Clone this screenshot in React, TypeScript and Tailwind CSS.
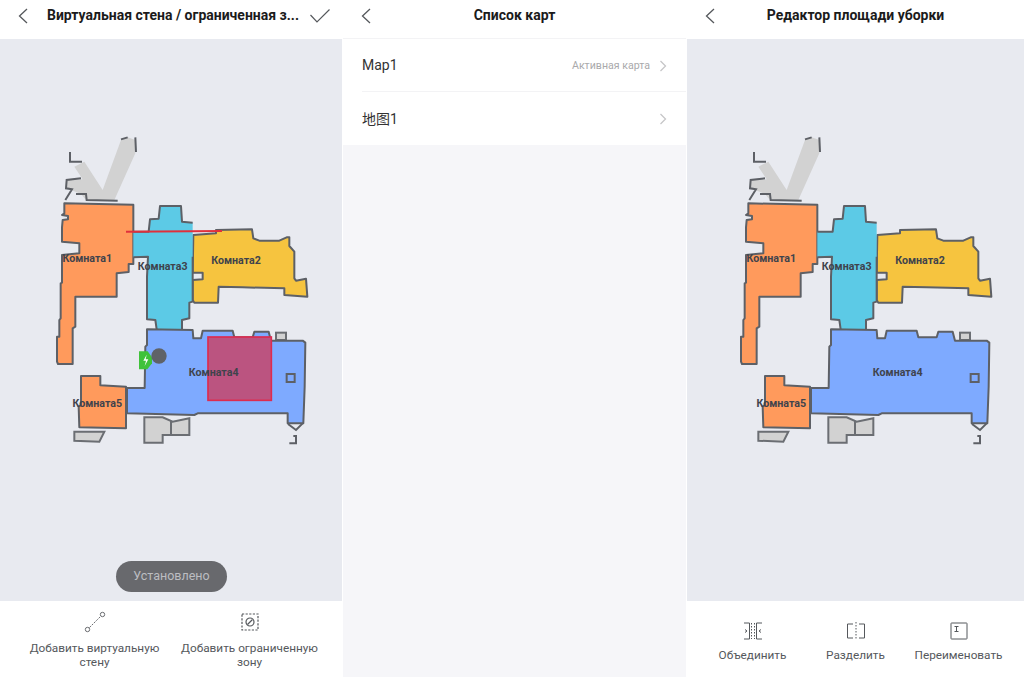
import React from 'react';

const room1 = '55,250 262,254 262,432 248,432 248,456 212,460 212,530 88,530 88,620 80,625 80,732 36,732 33,725 33,650 40,650 40,600 44,595 44,490 48,488 48,405 100,400 100,370 48,365 48,322 50,300 66,298 66,288 48,285 55,280';
const room2 = '442,345 510,340 510,330 618,328 622,355 640,362 700,362 722,352 730,352 730,378 745,395 745,475 750,482 780,476 784,530 715,525 715,505 590,502 518,500 516,548 445,548 440,540 440,480 470,478 470,458 440,458';
const room3 = '262,335 308,335 312,298 338,296 342,258 405,258 408,305 440,308 440,545 430,548 430,595 408,600 408,628 332,628 328,600 303,598 303,470 306,410 262,412';
const room4 = '303,628 440,630 442,655 465,655 470,632 560,632 565,652 620,652 625,635 668,635 675,662 770,662 778,668 776,800 772,910 725,910 725,880 455,880 445,885 243,880 243,804 296,804 298,680 303,675';
const room5 = '105,768 163,768 163,796 240,800 240,925 100,922 98,860 105,855';

const labels = [
  { text: 'Комната1', x: 124, y: 426 },
  { text: 'Комната3', x: 350, y: 449 },
  { text: 'Комната2', x: 570, y: 433 },
  { text: 'Комната4', x: 503, y: 768 },
  { text: 'Комната5', x: 154, y: 860 },
];

function RoomMap({ editing }: { editing?: boolean }) {
  return (
    <svg width="280" height="330" viewBox="0 0 840 990" className="block shrink-0">
      <g fill="#d2d2d2">
        <polygon points="85,140 115,125 170,210 225,60 245,52 268,60 268,100 205,240 120,240 105,222 62,205 62,180 110,178" />
        <polygon points="85,935 175,935 160,965 85,962" stroke="#6b6e73" strokeWidth="6" />
        <path d="M295 892 L350 892 L380 905 L430 895 L430 945 L350 945 L350 968 L295 968 Z M375 905 L375 945" stroke="#6b6e73" strokeWidth="6" />
        <rect x="690" y="638" width="30" height="22" stroke="#6b6e73" strokeWidth="6" />
      </g>
      <g fill="none" stroke="#5d6066" strokeWidth="6">
        <path d="M225 58 L245 52 M268 52 L270 96" />
        <path d="M72 96 L72 125 L108 125" />
        <path d="M105 175 L62 180 L60 205 L78 208 L58 240 M90 222 L120 222 L122 240 L215 242" />
        <path d="M50 320 L96 322" strokeWidth="8" />
        <path d="M726 912 L750 930 L770 910 M730 970 L750 970 L750 948 L742 948" />
      </g>
      <g stroke="#5d6066" strokeWidth="6" strokeLinejoin="round">
        <polygon points={room1} fill="#ff9a5c" />
        <polygon points={room2} fill="#f6c43f" />
        <polygon points={room3} fill="#5ccae6" stroke="none" />
        <path d="M262 335 L308 335 L312 298 L338 296 L342 258 L405 258 L408 305 L440 308 M440 410 L440 545 L430 548 L430 595 L408 600 L408 628 M332 628 L328 600 L303 598 L303 470 L306 410 L262 412" fill="none" />
        <polygon points={room4} fill="#7eaaff" />
        <polygon points={room5} fill="#ff9a5c" />
      </g>
      <rect x="722" y="762" width="24" height="24" fill="none" stroke="#5d6066" strokeWidth="6" />
      {!editing && (
        <g>
          <line x1="240" y1="335" x2="528" y2="333" stroke="#e0303c" strokeWidth="6" />
          <rect x="486" y="651" width="190" height="190" fill="#bb5480" stroke="#dc2c50" strokeWidth="5" />
          <path d="M279 694 L305 694 L318 712 L318 730 L304 748 L279 748 Z" fill="#3fc23a" />
          <path d="M302 704 L292 722 L300 722 L296 738 L307 718 L299 718 Z" fill="#fff" />
          <circle cx="339" cy="708" r="23" fill="#5f6267" />
        </g>
      )}
      {labels.map((l) => (
        <text
          key={l.text}
          x={l.x}
          y={l.y}
          textAnchor="middle"
          fontFamily="Roboto, sans-serif"
          fontWeight="700"
          fontSize="32"
          fill="#3f434c"
        >
          {l.text}
        </text>
      ))}
    </svg>
  );
}

function Back() {
  return (
    <svg width="12" height="16" viewBox="0 0 12 16" fill="none" stroke="#55585c" strokeWidth="1.3" className="shrink-0">
      <path d="M10 1 L2.5 8 L10 15" />
    </svg>
  );
}

function Chevron() {
  return (
    <svg width="8" height="12" viewBox="0 0 8 12" fill="none" stroke="#c6c6c8" strokeWidth="1.3" className="shrink-0">
      <path d="M1.5 1 L6.5 6 L1.5 11" />
    </svg>
  );
}

function Header({ title, check }: { title: string; check?: boolean }) {
  return (
    <div className="h-[39px] shrink-0 bg-white flex items-center pl-[17px] pb-[8px]">
      <Back />
      <div
        className={
          check
            ? 'ml-[18px] w-[250px] text-[14px] font-bold text-[#1b1b1b] whitespace-nowrap'
            : 'flex-1 pr-[29px] text-center text-[14px] font-bold text-[#1b1b1b] whitespace-nowrap'
        }
      >
        {title}
      </div>
      {check && (
        <svg width="20" height="14" viewBox="0 0 20 14" fill="none" stroke="#55585c" strokeWidth="1.2" className="ml-[13px]">
          <path d="M0.5 6 L7 13 L19.5 0.5" />
        </svg>
      )}
    </div>
  );
}

function Action({ label, width, children }: { label: React.ReactNode; width: string; children: React.ReactNode }) {
  return (
    <div className={`${width} flex flex-col items-center text-center text-[11.8px] leading-[14px] text-[#55585c]`}>
      {children}
      <div className="mt-[8px]">{label}</div>
    </div>
  );
}

export default function App() {
  return (
    <div className="flex w-[1024px] h-[677px] overflow-hidden bg-white font-['Roboto','Noto_Sans_CJK_SC',sans-serif]">
      {/* virtual wall */}
      <div className="w-[343px] flex flex-col border-r border-white">
        <Header title="Виртуальная стена / ограниченная з..." check />
        <div className="relative flex-1 bg-[#e8eaf0] pl-[46px] pt-[81px]">
          <RoomMap />
          <div className="absolute left-[116px] bottom-[9px] w-[111px] h-[31px] rounded-full bg-[#68696d] flex items-center justify-center text-[12.5px] text-[#bcbdc1]">
            Установлено
          </div>
        </div>
        <div className="h-[76px] shrink-0 bg-white flex pl-[17px] pt-[10px]">
          <Action
            width="w-[155px]"
            label={<>Добавить виртуальную<br />стену</>}
          >
            <svg width="22" height="22" viewBox="0 0 22 22" fill="none" stroke="#6a6c70" strokeWidth="1">
              <circle cx="3.5" cy="18.5" r="2.2" />
              <circle cx="18.5" cy="3.5" r="2.2" />
              <path d="M5.5 16.5 L16.5 5.5" strokeDasharray="2 1.2" />
            </svg>
          </Action>
          <Action
            width="w-[155px]"
            label={<>Добавить ограниченную<br />зону</>}
          >
            <svg width="22" height="22" viewBox="0 0 22 22" fill="none" stroke="#55585c" strokeWidth="1.2">
              <rect x="3" y="3" width="16" height="16" strokeDasharray="2.2 1.4" />
              <circle cx="11" cy="11" r="4" />
              <path d="M8.5 13.5 L13.5 8.5" />
            </svg>
          </Action>
        </div>
      </div>

      {/* map list */}
      <div className="w-[344px] flex flex-col bg-[#f6f6f9] border-r border-white">
        <Header title="Список карт" />
        <div className="bg-white pl-[19px] border-t border-[#f3f3f5] -mt-px">
          <div className="h-[53px] flex items-center pt-[1px] pr-[19px] border-b border-[#f3f3f5] text-[14px] text-[#333]">
            <span className="flex-1">Map1</span>
            <span className="mr-[9px] text-[10.6px] text-[#a9a9ab]">Активная карта</span>
            <Chevron />
          </div>
          <div className="h-[53px] flex items-center pt-[1px] pr-[19px] text-[14px] text-[#333]">
            <span className="flex-1">地图1</span>
            <Chevron />
          </div>
        </div>
      </div>

      {/* area editor */}
      <div className="flex-1 flex flex-col">
        <Header title="Редактор площади уборки" />
        <div className="flex-1 bg-[#e8eaf0] pl-[43px] pt-[81px]">
          <RoomMap editing />
        </div>
        <div className="h-[76px] shrink-0 bg-white flex pl-[14px] pt-[21px]">
          <Action width="w-[103px]" label="Объединить">
            <svg width="20" height="18" viewBox="0 0 20 18" fill="none" stroke="#55585c" strokeWidth="1">
              <path d="M1 1 H6.5 V17 H1 M19 1 H13.5 V17 H19" />
              <path d="M8.5 1 V17 M11.5 1 V17" strokeDasharray="1.5 1.5" />
              <path d="M2 7.5 L4 9 L2 10.5 M18 7.5 L16 9 L18 10.5" />
            </svg>
          </Action>
          <Action width="w-[103px]" label="Разделить">
            <svg width="20" height="18" viewBox="0 0 20 18" fill="none" stroke="#55585c" strokeWidth="1">
              <path d="M7 2 H1.5 V16 H7 M13 2 H18.5 V16 H13" />
              <path d="M10 0 V18" strokeDasharray="1.5 1.5" />
            </svg>
          </Action>
          <Action width="w-[103px]" label="Переименовать">
            <svg width="18" height="18" viewBox="0 0 18 18" fill="none" stroke="#55585c" strokeWidth="1">
              <rect x="1" y="1" width="16" height="16" rx="0.5" />
              <path d="M4.5 4.5 H8.5 M6.5 4.5 V9.5 M4.5 9.5 H8.5" />
            </svg>
          </Action>
        </div>
      </div>
    </div>
  );
}
